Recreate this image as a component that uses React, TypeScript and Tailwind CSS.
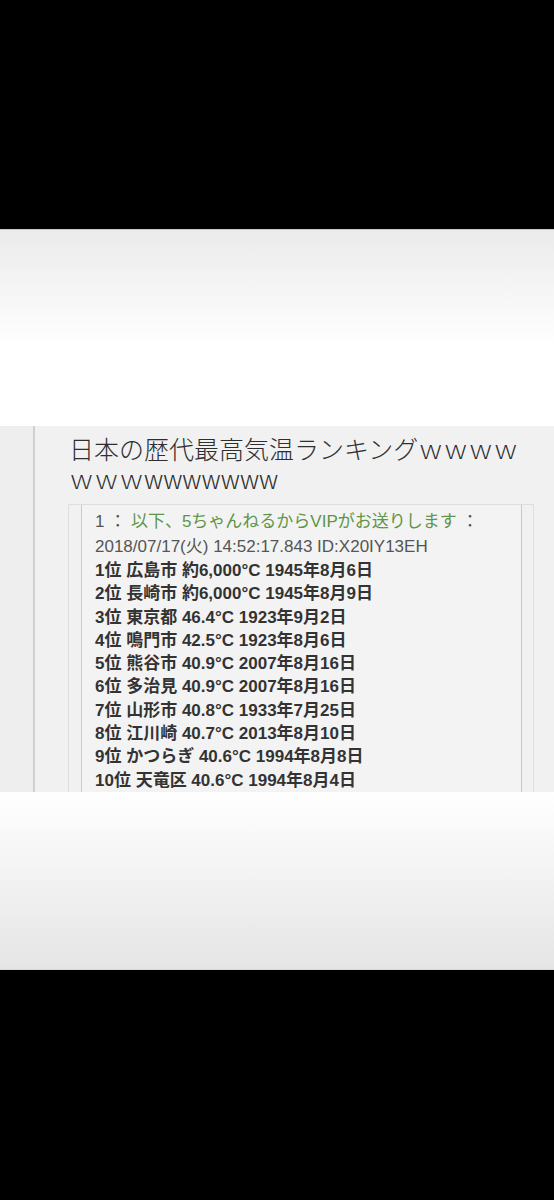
import React from "react";

const ranking = [
  "1位 広島市 約6,000°C 1945年8月6日",
  "2位 長崎市 約6,000°C 1945年8月9日",
  "3位 東京都 46.4°C 1923年9月2日",
  "4位 鳴門市 42.5°C 1923年8月6日",
  "5位 熊谷市 40.9°C 2007年8月16日",
  "6位 多治見 40.9°C 2007年8月16日",
  "7位 山形市 40.8°C 1933年7月25日",
  "8位 江川崎 40.7°C 2013年8月10日",
  "9位 かつらぎ 40.6°C 1994年8月8日",
  "10位 天竜区 40.6°C 1994年8月4日",
];

const font = "font-['Liberation_Sans','Noto_Sans_CJK_JP',sans-serif]";

const App = () => {
  return (
    <div className={`w-[554px] h-[1200px] flex flex-col bg-black ${font}`}>
      <div className="h-[229px] bg-black" />
      <div className="h-[197px] border-t border-[#c9c9c9] bg-gradient-to-b from-[#ebebeb] via-white via-60% to-white" />

      {/* screenshot */}
      <div className="h-[366px] flex bg-[#efefef] overflow-hidden">
        <div className="w-[33px] bg-[#eeeeee]" />
        <div className="w-[2px] bg-[#d0d0d0]" />
        <div className="flex-1 flex flex-col bg-[#f1f1f1] pl-[33px] pr-[20px] pt-[7px]">
          <div className="text-[25px] leading-[30px] text-[#2e2e2e] font-light ml-px font-['Noto_Sans_CJK_JP',sans-serif]">
            <div>日本の歴代最高気温ランキングｗｗｗｗ</div>
            <div>ｗｗｗwwwwwww</div>
          </div>
          <div className="mt-[11px] flex-1 border-t border-l border-r border-[#dedede] pl-[12px] pr-[11px]">
            <div className="h-full border-l border-r border-[#c9c9c9] bg-[#f3f3f3] pl-[13px] pt-[5px]">
              <div className="text-[17px] leading-[24.5px] text-[#555]">
                1 ： <span className="text-[#5f9548]">以下、5ちゃんねるからVIPがお送りします</span> ：
              </div>
              <div className="text-[17px] leading-[24.5px] text-[#555]">
                2018/07/17(火) 14:52:17.843 ID:X20IY13EH
              </div>
              {ranking.map((r) => (
                <div key={r} className="text-[17px] leading-[23.3px] font-bold text-[#333]">
                  {r}
                </div>
              ))}
            </div>
          </div>
        </div>
      </div>

      <div className="h-[178px] border-b border-[#d6d6d6] bg-gradient-to-b from-white to-[#e6e5e5]" />
      <div className="flex-1 bg-black" />
    </div>
  );
};

export default App;
